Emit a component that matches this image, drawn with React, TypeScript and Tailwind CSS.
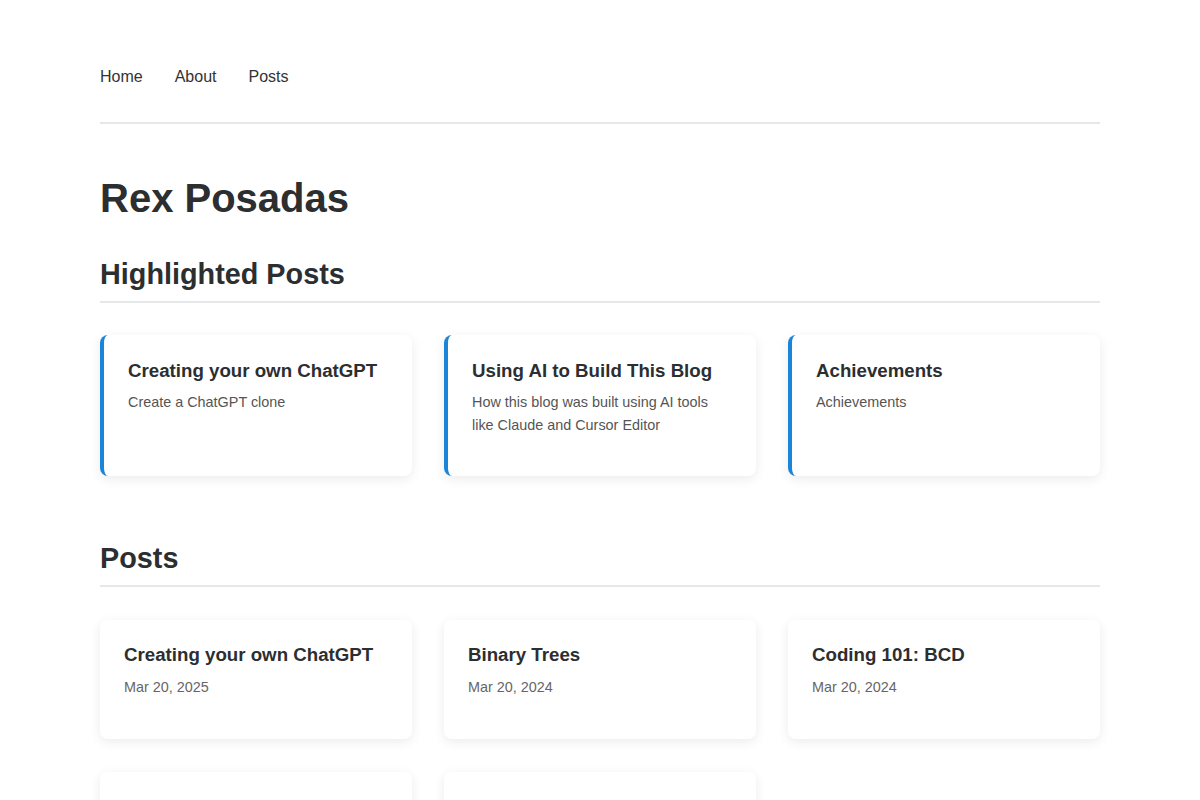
import React from "react";

const highlighted = [
  { title: "Creating your own ChatGPT", desc: "Create a ChatGPT clone" },
  { title: "Using AI to Build This Blog", desc: "How this blog was built using AI tools like Claude and Cursor Editor" },
  { title: "Achievements", desc: "Achievements" },
];

const posts = [
  { title: "Creating your own ChatGPT", date: "Mar 20, 2025" },
  { title: "Binary Trees", date: "Mar 20, 2024" },
  { title: "Coding 101: BCD", date: "Mar 20, 2024" },
  { title: "", date: "" },
  { title: "", date: "" },
];

export default function App() {
  return (
    <div className="min-h-screen bg-white text-[#2c2e30]" style={{ fontFamily: '"Liberation Sans", Arial, sans-serif' }}>
      <div className="mx-auto w-[1000px] pt-[65px]">
        <nav className="flex gap-8 pb-[33px] text-[16px] leading-6 text-[#333]">
          <a>Home</a>
          <a>About</a>
          <a>Posts</a>
        </nav>
        <div className="h-[2px] bg-[#e5e7e9]" />
        <h1 className="mt-[50px] text-[40px] font-bold leading-[48px]">Rex Posadas</h1>
        <h2 className="mt-[34px] text-[28.8px] font-bold leading-9">Highlighted Posts</h2>
        <div className="mt-[9px] h-[2px] bg-[#e5e7e9]" />
        <div className="mt-8 grid grid-cols-3 gap-8">
          {highlighted.map((p) => (
            <div
              key={p.title}
              className="h-[141px] rounded-lg border-l-4 border-[#1a84d8] bg-white pl-6 pr-6 pt-[23px] shadow-[0_3px_12px_rgba(0,0,0,0.08)]"
            >
              <div className="text-[18.7px] font-bold leading-[25px] text-[#2c2e30]">{p.title}</div>
              <div className="mt-2 text-[14.4px] leading-[23px] text-[#555]">{p.desc}</div>
            </div>
          ))}
        </div>
        <h2 className="mt-[64px] text-[28.8px] font-bold leading-9">Posts</h2>
        <div className="mt-[9px] h-[2px] bg-[#e5e7e9]" />
        <div className="mt-[33px] grid grid-cols-3 gap-x-8 gap-y-[33px] pb-8">
          {posts.map((p, i) => (
            <div
              key={i}
              className="h-[119px] rounded-lg bg-white px-6 pt-[22px] shadow-[0_3px_12px_rgba(0,0,0,0.08)]"
            >
              {p.title && (
                <>
                  <div className="text-[18.7px] font-bold leading-[25px] text-[#2c2e30]">{p.title}</div>
                  <div className="mt-[10px] text-[14.4px] leading-5 text-[#666]">{p.date}</div>
                </>
              )}
            </div>
          ))}
        </div>
      </div>
    </div>
  );
}
